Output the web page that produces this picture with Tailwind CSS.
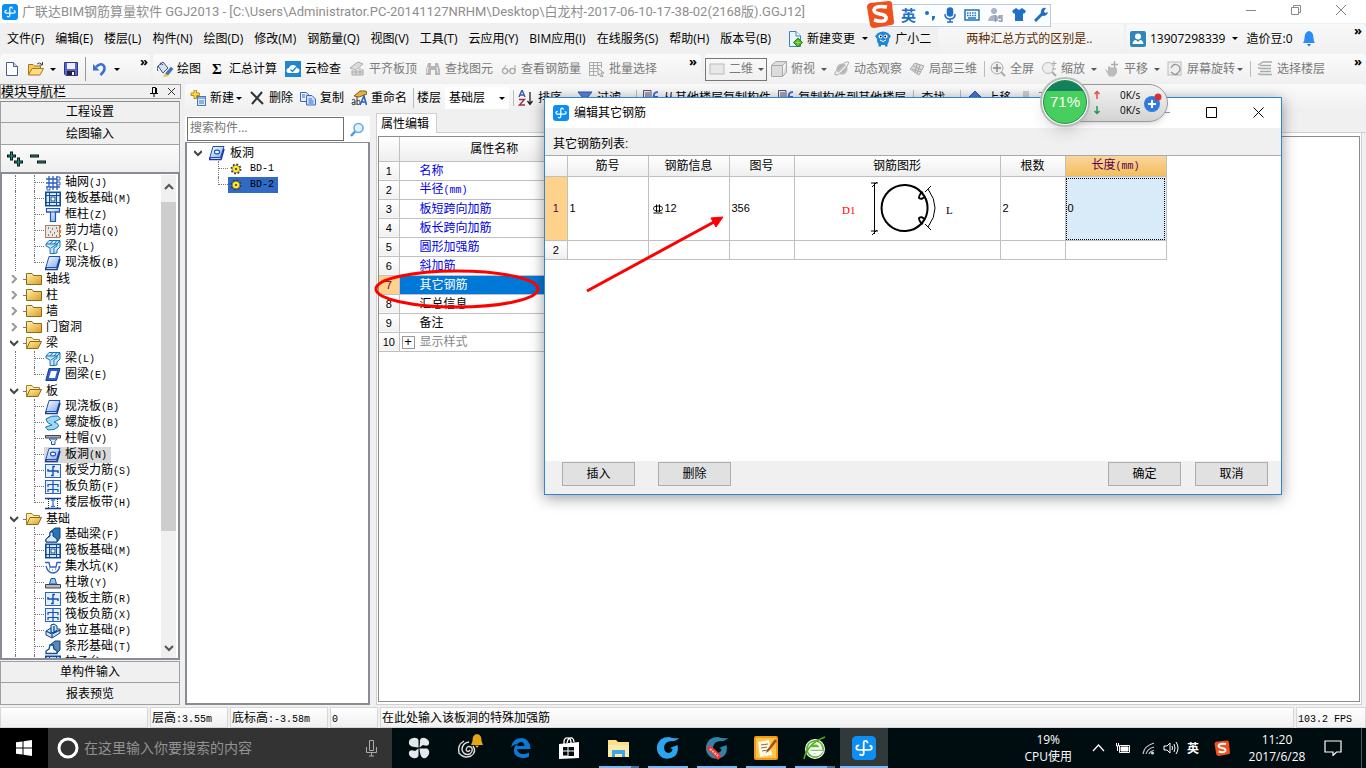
<!DOCTYPE html>
<html lang="zh-CN">
<head>
<meta charset="utf-8">
<meta name="viewport" content="width=device-width, initial-scale=1">
<title>广联达BIM钢筋算量软件 GGJ2013</title>
<script src="https://cdn.jsdelivr.net/npm/@tailwindcss/browser@4"></script>
</head>
<body class="relative flex h-screen flex-col overflow-hidden bg-[#f0f0f0] text-xs text-black font-['Open_Sans','Noto_Sans_CJK_SC',sans-serif]">

<svg class="absolute size-0">
  <linearGradient id="gBlue" x1="0" y1="0" x2="1" y2="1"><stop offset="0" stop-color="#ffffff"/><stop offset="1" stop-color="#7fa8ec"/></linearGradient>
  <linearGradient id="gGold" x1="0" y1="0" x2="1" y2="1"><stop offset="0" stop-color="#fff3b0"/><stop offset="1" stop-color="#dc9c1c"/></linearGradient>
  <symbol id="app" viewBox="0 0 16 16"><rect width="16" height="16" rx="3" fill="#0c8ff5"/><path d="M10.400 4.800Q10.300 3.200 9 3.200Q7.800 3.200 7.800 4.600V11.300Q7.800 12.800 6.500 12.800Q5.400 12.800 5.200 11.800M4.800 6.300Q2.900 6.300 2.900 7.800Q2.900 9.200 4.400 9.200H11.500Q13.200 9.200 13.200 7.800Q13.200 6.500 11.700 6.500" fill="none" stroke="#fff" stroke-width="1.200"/></symbol>
  <symbol id="doc" viewBox="0 0 16 16"><path d="M2.500 1.500H9.500L13.500 5.500V14.500H2.500Z" fill="#fff" stroke="#44618e"/><path d="M9.500 1.500V5.500H13.500" fill="#c8d8f0" stroke="#44618e"/></symbol>
  <symbol id="open" viewBox="0 0 16 16"><path d="M.5 14V3.500H5L6.500 5H12.500V7.500" fill="#f5c95c" stroke="#a8781c"/><path d="M.5 14L4 7.500H15.500L12 14Z" fill="#ffdd80" stroke="#a8781c"/><path d="M9 3Q12 .5 14 3.500M14.500 1V4H11.500" fill="none" stroke="#445"/></symbol>
  <symbol id="save" viewBox="0 0 16 16"><path d="M1.500 1.500H14.500V14.500H3L1.500 13Z" fill="#5a68cc" stroke="#2b3590"/><path d="M4 2H12V8H4Z" fill="#eef"/><path d="M4 10H12V14H4Z" fill="#223"/><path d="M9 11H11V14H9Z" fill="#fff"/></symbol>
  <symbol id="undo" viewBox="0 0 16 16"><path d="M4 6Q9 1 12 5Q14 9 8.500 14" fill="none" stroke="#3b6fd0" stroke-width="2.600"/><path d="M1 3V9.500H7.500Z" fill="#3b6fd0"/></symbol>
  <symbol id="paint" viewBox="0 0 16 16"><path d="M1 5L6 1L11 7L6 12Z" fill="#d5e0f2" stroke="#3a5078"/><path d="M4 4Q2 0 6 4M1 5Q-.5 8 1 10" stroke="#3a5078" fill="none"/><path d="M8 13L14 6L16 8L11 14Z" fill="#3f76c0" stroke="#28508c" stroke-width=".5"/><path d="M8 12L12 15L6 16Z" fill="#f0c040"/></symbol>
  <symbol id="cloud" viewBox="0 0 16 16"><rect width="16" height="16" fill="#1f86d2"/><path d="M4 12Q1 12 1.500 9Q2 7 4 7Q5 3.500 8.500 4Q11 4 11.500 7Q15 7.500 14.500 10Q14 12 12 12Z" fill="#fff"/><path d="M5.500 8.500L7.500 10.500L11 6.500" stroke="#1f86d2" fill="none" stroke-width="1.200"/></symbol>
  <symbol id="flat" viewBox="0 0 16 16"><path d="M1 7L9 1L14 3L7 9Z" fill="#ddd" stroke="#aaa"/><path d="M3 9V14H14V8M3 11H14M7 9V14M11 7V14" stroke="#aaa" fill="#ddd"/></symbol>
  <symbol id="bino" viewBox="0 0 16 16"><path d="M3 2H6V5H10V2H13L15 9V14H10V9H6V14H1V9Z" fill="#b5b5b5"/><path d="M3 6L2 12M12 6L13 12" stroke="#eee"/></symbol>
  <symbol id="glass" viewBox="0 0 16 16"><circle cx="4" cy="10" r="2.600" fill="none" stroke="#aaa" stroke-width="1.300"/><circle cx="11.500" cy="10" r="2.600" fill="none" stroke="#aaa" stroke-width="1.300"/><path d="M1.500 9L5 4M14 10V4M7 10H9" stroke="#aaa" fill="none"/></symbol>
  <symbol id="batch" viewBox="0 0 16 16"><path d="M.5 1.500H12.500V7M.5 1.500V14.500H8M.5 4.500H12.500M.5 7.500H9M.5 10.500H8M4.500 1.500V14.500M8.500 1.500V8" stroke="#aaa" fill="none"/><path d="M9 7L15 12H12L14 16L12 16L10.500 13L9 14Z" fill="#eee" stroke="#999"/></symbol>
  <symbol id="flat2d" viewBox="0 0 16 16"><rect x="1" y="3" width="14" height="10" fill="#e8e8e8" stroke="#bbb"/></symbol>
  <symbol id="cube" viewBox="0 0 16 16"><path d="M.5 4.500H11.500V15.500H.5ZM.5 4.500L4.500 .5H15.500L11.500 4.500M15.500 .5V11.500L11.500 15.500" fill="#dcdcdc" stroke="#aaa"/></symbol>
  <symbol id="orbit" viewBox="0 0 16 16"><circle cx="8" cy="8" r="5.500" fill="#bbb"/><path d="M1 14Q4 15 9 10Q15 4 14.500 1Q11 0 6 6Q0 11 1 14" fill="none" stroke="#a8a8a8"/><path d="M4 13L12 5" stroke="#eee" stroke-width="1.500"/></symbol>
  <symbol id="local3" viewBox="0 0 16 16"><path d="M1 8L6 2L15 5L10 14Z" fill="#ddd" stroke="#aaa"/><path d="M4 5L13 9M3 8L12 11M8 3L6 12M11 4L8 13" stroke="#aaa"/></symbol>
  <symbol id="full" viewBox="0 0 16 16"><circle cx="7" cy="7" r="6" fill="#eee" stroke="#aaa"/><path d="M7 3V11M3 7H11" stroke="#888" stroke-width="1.500"/><path d="M11 11L15 15" stroke="#aaa" stroke-width="2"/></symbol>
  <symbol id="zoomi" viewBox="0 0 16 16"><circle cx="7" cy="7" r="5.500" fill="#eee" stroke="#bbb"/><path d="M11 11L15 15" stroke="#aaa" stroke-width="2"/><path d="M13 0V5M10.500 2.500H15.500M11 8H15" stroke="#aaa"/></symbol>
  <symbol id="hand" viewBox="0 0 16 16"><path d="M1 8L4 10L4 6L6 5L7 7L8 6L10 7L12 6L13 8V12L10 15.500H5Z" fill="#bbb"/><path d="M10.500 0V7M7 3.500H14" stroke="#aaa" stroke-width="1.300"/></symbol>
  <symbol id="rot" viewBox="0 0 16 16"><rect x="1" y="1" width="13" height="13" fill="#eee" stroke="#bbb"/><path d="M4 7Q7 1 12 5Q15 10 9 13M4 11Q8 15 11 13" fill="none" stroke="#999" stroke-width="1.300"/></symbol>
  <symbol id="floors" viewBox="0 0 16 16"><path d="M1 4L6 1H15M3 4.500H14M3 7.500H14M3 10.500H14M3 13.500H15M1 7H3M1 13H3" stroke="#aaa" fill="none" stroke-width="1.300"/></symbol>
  <symbol id="newc" viewBox="0 0 16 16"><path d="M4 0H6.500V3H9.500V5.500H6.500V8.500H4V5.500H1V3H4Z" fill="#ffd84c" stroke="#b98c12"/><rect x="7.500" y="6.500" width="8" height="9" fill="#d7e8ff" stroke="#4a77b8"/><path d="M8 8H15M9 11H14M9 13H14" stroke="#4a77b8"/></symbol>
  <symbol id="delx" viewBox="0 0 16 16"><path d="M2 2L14 14M13 2L3 14" stroke="#333" stroke-width="2"/></symbol>
  <symbol id="copy" viewBox="0 0 16 16"><path d="M.5 2.500H6L9 5V11.500H.5Z" fill="#e5eeff" stroke="#3e68b8"/><path d="M6.500 5.500H12L15.500 9V15H6.500Z" fill="#cfe0ff" stroke="#3e68b8"/><path d="M2 5H5M2 7H5M8.500 9H12M8.500 11H13.500M8.500 13H13.500" stroke="#3e68b8"/></symbol>
  <symbol id="ren" viewBox="0 0 16 16"><path d="M3 6L9 1L15 1L16 4L8 7Z" fill="#e8b038" stroke="#806020"/><path d="M1 10Q4 8 4 11V15M4 12Q0 12 1 14Q2 15.500 4 14M6 7V15M6 11Q9 9 9 12.500Q9 15.500 6 14" fill="none" stroke="#333"/><path d="M9 15L13 6L15.500 15M10.500 12H15" fill="none" stroke="#2b5fc0" stroke-width="1.600"/></symbol>
  <symbol id="sort" viewBox="0 0 16 16"><path d="M1 7L4 0L7 7M2 5H6" fill="none" stroke="#3058b0" stroke-width="1.400"/><path d="M1 9.500H6.500L1.500 15H7" fill="none" stroke="#a03048" stroke-width="1.400"/><path d="M12 2V14M9.500 11L12 14.500L14.500 11" fill="none" stroke="#222" stroke-width="1.300"/></symbol>
  <symbol id="filt" viewBox="0 0 16 16"><path d="M1 2H15L10 8V14L6 12V8Z" fill="#5b83d6" stroke="#3555a0"/></symbol>
  <symbol id="cpf" viewBox="0 0 16 16"><path d="M.5 .5H8V12H.5Z" fill="#eef" stroke="#556"/><path d="M2 3H7M2 5H7M2 7H7" stroke="#556"/><path d="M15 2Q10 2 11 7H15M9 7L12 12" stroke="#3b6fd0" stroke-width="2" fill="none"/></symbol>
  <symbol id="up" viewBox="0 0 16 16"><path d="M8 1L15 8H11V14H5V8H1Z" fill="#4a74d0" stroke="#2d4f9c"/></symbol>
  <symbol id="down" viewBox="0 0 16 16"><path d="M8 15L15 8H11V1H5V8H1Z" fill="#ccc"/></symbol>
  <symbol id="chg" viewBox="0 0 16 16"><path d="M2.500 .5H9L13.500 5V15.500H2.500Z" fill="#eaf5ff" stroke="#3a86b8"/><path d="M9 .5V5H13.500" fill="#fff" stroke="#3a86b8"/><path d="M11 7L15.500 11.500L11 16L6.500 11.500Z" fill="#48b424" stroke="#2c8010"/><path d="M11 9V14M8.500 11.500H13.500" stroke="#8fe060"/></symbol>
  <symbol id="robot" viewBox="0 0 16 16"><path d="M3 2Q8-1 13 2L16 5L14 8Q14 12 12.500 13V15.500H10V14H6V15.500H3.500V13Q2 12 2 8L0 5Z" fill="#1d86d8"/><circle cx="5.500" cy="5.500" r="2" fill="#fff"/><circle cx="10.500" cy="5.500" r="2" fill="#fff"/><circle cx="5.800" cy="5.500" r=".9"/><circle cx="10.200" cy="5.500" r=".9"/><path d="M5 9Q8 12 11 9" stroke="#fff" fill="none"/></symbol>
  <symbol id="user" viewBox="0 0 16 16"><rect width="16" height="16" rx="2" fill="#2f86bd"/><circle cx="8" cy="5.500" r="3" fill="#fff"/><path d="M2.500 13Q3 9 6 9L8 11L10 9Q13 9 13.500 13Z" fill="#fff"/></symbol>
  <symbol id="bell" viewBox="0 0 16 16"><path d="M8 0Q12.500 1 12.500 7Q12.500 10 14 12H2Q3.500 10 3.500 7Q3.500 1 8 0Z" fill="#2b8cf5"/><path d="M6 13H10L8 15.500Z" fill="#2b6cc5"/></symbol>
  <symbol id="mag" viewBox="0 0 16 16"><circle cx="9.500" cy="6" r="4.500" fill="#dff1ff" stroke="#64aee0" stroke-width="1.600"/><path d="M6 9.500L2 14" stroke="#4a98d4" stroke-width="2.400"/></symbol>

  <symbol id="fold" viewBox="0 0 16 16"><path d="M.5 2.500H6L7.500 4.500H15.500V13.500H.5Z" fill="url(#gGold)" stroke="#8a6a1c"/></symbol>
  <symbol id="foldo" viewBox="0 0 16 16"><path d="M.5 13.500V2.500H6L7.500 4.500H13.500V7" fill="#ffe9a0" stroke="#a9832c"/><path d="M.5 13.500L4 6.500H15.500L12 13.500Z" fill="url(#gGold)" stroke="#8a6a1c"/></symbol>
  <symbol id="grid" viewBox="0 0 16 16"><path d="M4 1V15M8 1V15M12 1V15M1 4H15M1 8H15M1 12H15" stroke="#2a5bc0" stroke-width="1.300"/><path d="M12 2H15V5H12ZM12 7H15V10H12ZM2 12H5V15H2Z" fill="#fff" stroke="#2a5bc0"/></symbol>
  <symbol id="raft" viewBox="0 0 16 16"><rect x=".8" y="1.300" width="14.400" height="13.400" fill="#e0edff" stroke="#104a98" stroke-width="1.600"/><path d="M4.500 2V14M11.500 2V14M1 4.500H15M1 11.500H15" stroke="#104a98"/><rect x="6" y="6" width="4" height="4" fill="#fff" stroke="#104a98"/></symbol>
  <symbol id="col" viewBox="0 0 16 16"><path d="M1.500 1.500H14.500V5H10.500V14.500H5.500V5H1.500Z" fill="url(#gBlue)" stroke="#1f56b0" stroke-width="1.200"/><path d="M1 5H15" stroke="#1f56b0"/></symbol>
  <symbol id="shear" viewBox="0 0 16 16"><rect x=".5" y="2.500" width="14" height="12" fill="#e9e6e4" stroke="#b7795c"/><path d="M3 5H4M7 6H8M11 5H12M5 9H6M9 10H10M12 8H13M3 12H4M7 12H8M11 13H12" stroke="#222"/><path d="M15 2V5M15 7V10M15 12V14" stroke="#e07030" stroke-width="2"/></symbol>
  <symbol id="beam" viewBox="0 0 16 16"><path d="M1 5L4 1.500H15L12 5ZM1 5V7L5 9V14.500H9V9L12 7V5M12 5L15 2V8L12 11V14L9 14.500" fill="#c7e4fb" stroke="#1874b8"/><path d="M5 5L8 1.500M9 5L12 1.500M6 9L12 5" stroke="#1874b8"/></symbol>
  <symbol id="slab" viewBox="0 0 16 16"><path d="M4 1.500H15L11.500 12.500H.8Z" fill="url(#gBlue)" stroke="#1f4fb0"/><path d="M.8 12.500V14.500H12L15 4" fill="none" stroke="#14389c" stroke-width="1.600"/></symbol>
  <symbol id="ring" viewBox="0 0 16 16"><path d="M4 1.500H15L11.500 13.500H.8Z" fill="#2f5fc8" stroke="#123c94"/><path d="M6 4H12L10 11H4Z" fill="#fff"/></symbol>
  <symbol id="spiral" viewBox="0 0 16 16"><path d="M1 4Q6 0 13 1L15.500 4L9 7Q15 9 13 12Q10 15.500 3 15L.5 12L7 10Q1 8 1 4Z" fill="#9fd7f5" stroke="#1874b8"/></symbol>
  <symbol id="cap" viewBox="0 0 16 16"><path d="M.5 4.500H15.500V7H.5Z" fill="#aaa" stroke="#444"/><path d="M4 8H12L10 10.500V13.500H6.500V10.500Z" fill="#dceaff" stroke="#1f56b0"/></symbol>
  <symbol id="hole" viewBox="0 0 16 16"><path d="M4 1.500H15L11.500 12.500H.8Z" fill="url(#gBlue)" stroke="#1f4fb0"/><ellipse cx="8" cy="7" rx="2.600" ry="1.900" fill="#fff" stroke="#1f4fb0" stroke-width="1.100"/><path d="M.8 12.500V14.500H12L15 4" fill="none" stroke="#14389c" stroke-width="1.600"/></symbol>
  <symbol id="reb" viewBox="0 0 16 16"><rect x=".5" y="1.500" width="15" height="13" fill="#e4efff" stroke="#2e62c0"/><path d="M10 3.500H8V12.500H6M3 6V8H13V10" stroke="#1450b0" stroke-width="1.400" fill="none"/></symbol>
  <symbol id="neg" viewBox="0 0 16 16"><rect x=".5" y="1.500" width="15" height="13" fill="#e4efff" stroke="#2e62c0"/><path d="M8 2V14M3 8V5.500H13V8M3 13V10.500H13V13" stroke="#1450b0" stroke-width="1.200" fill="none"/></symbol>
  <symbol id="band" viewBox="0 0 16 16"><path d="M0 3.500H16M0 13.500H16" stroke="#14389c" stroke-width="1.500"/><path d="M3.500 4V13M12.500 4V13" stroke="#333" stroke-dasharray="1 1"/><path d="M8 5V12M6 5H10M6 11.500H10" stroke="#3b78d8" stroke-width="1.300"/></symbol>
  <symbol id="fbeam" viewBox="0 0 16 16"><path d="M1 12L5 8V5L10 1H15V11L12 15H1Z" fill="#2874b8" stroke="#0e3e78"/><path d="M1 15V12L5 9V5H8V9L12 12V15Z" fill="#d5ebfb" stroke="#0e3e78"/></symbol>
  <symbol id="pit" viewBox="0 0 16 16"><path d="M0 3.500H4L5 8H11L12 3.500H16M1 7Q3 14 8 14Q13 14 15 7" fill="none" stroke="#2e62c0" stroke-width="1.300"/><path d="M4 10H5M7 11H8M10 10H11M13 8H14" stroke="#2e62c0"/></symbol>
  <symbol id="pier" viewBox="0 0 16 16"><path d="M6 3.500H10L11.500 9H4.500Z" fill="#9cc3f2" stroke="#1f56b0"/><path d="M.5 9.500H15.500V13H.5Z" fill="#bbb" stroke="#345"/></symbol>
  <symbol id="iso" viewBox="0 0 16 16"><path d="M1 8L6 5V2L9 1L12 3V6L15 6V10L7 15L1 12Z" fill="#cfe6fa" stroke="#0e3e78"/><path d="M6 5V9L9 10L12 7M1 8L7 11L15 7M7 11V15M9 3V10" stroke="#0e4e98" stroke-width="1.300" fill="none"/></symbol>
  <symbol id="strip" viewBox="0 0 16 16"><path d="M5 6L10 2H15V11L12 14Z" fill="#5b87b8" stroke="#0e3e78"/><path d="M1 14.500V12L4 10L5 6H8L9 10L12 12V14.500Z" fill="#fff" stroke="#0e4e98" stroke-width="1.300"/></symbol>
  <symbol id="gear" viewBox="0 0 16 16"><circle cx="8" cy="8" r="4.500" fill="none" stroke="#333" stroke-width="1.800" stroke-dasharray="1.800 1.700"/><circle cx="8" cy="8" r="3.800" fill="#ffe820" stroke="#555" stroke-width=".6"/><circle cx="8" cy="8" r="1.100" fill="#333"/></symbol>
  <symbol id="sogou" viewBox="0 0 28 28"><path d="M4 3L23 1Q26 1 26 4L28 22Q28 25 25 25L8 28Q5 28 4 25L1 7Q1 4 4 3Z" fill="#f0501e"/><path d="M21 7Q9 5 8 10Q8 13 14 14Q21 15 20 19Q18 23 8 20" fill="none" stroke="#fff" stroke-width="3.600"/></symbol>
  <symbol id="swirl" viewBox="0 0 24 24"><path d="M23.500 2Q19 6 16 5Q9 5 8 11Q8 16 12 17Q16 17 16.500 13L14 12L21.500 9Q23 16 19 20Q14 24 7 22Q0 18 1 10Q3 1 13 1Q18 3 23.500 2Z"/></symbol>
</svg>

<!-- title bar -->
<header class="flex h-[23px] shrink-0 items-center bg-white pl-[2px] text-[#8e8e8e]">
  <svg class="mr-1 size-4"><use href="#app"/></svg>
  <h1 class="whitespace-nowrap font-['Roboto','Noto_Sans_CJK_SC',sans-serif] text-[13px]">广联达BIM钢筋算量软件 GGJ2013 - [C:\Users\Administrator.PC-20141127NRHM\Desktop\白龙村-2017-06-10-17-38-02(2168版).GGJ12]</h1>
  <div class="ml-auto flex items-center gap-[35px] pb-1 pr-5">
    <button aria-label="最小化" class="block"><svg class="size-[10px]" fill="none" stroke="#888"><path d="M0 5.500H10"/></svg></button>
    <button aria-label="还原" class="block"><svg class="size-[10px]" fill="none" stroke="#888"><path d="M.5 2.500H7.500V9.500H.5ZM2.500 2V.5H9.500V7.500H8"/></svg></button>
    <button aria-label="关闭" class="block"><svg class="size-[10px]" fill="none" stroke="#888"><path d="M0 0L10 10M10 0L0 10"/></svg></button>
  </div>
</header>

<!-- menu bar -->
<nav class="flex h-[31px] shrink-0 items-center whitespace-nowrap">
  <div id="menus" class="flex gap-[11px] pl-[7px]"></div>
  <button class="ml-4 flex items-center gap-1"><svg class="size-4"><use href="#chg"/></svg>新建变更<span class="ml-[3px] border-x-[3px] border-t-[3px] border-x-transparent border-t-black"></span></button>
  <button class="ml-[7px] flex items-center gap-1"><svg class="size-4"><use href="#robot"/></svg>广小二</button>
  <a href="#" class="ml-[7px] flex h-[30px] flex-1 items-center rounded bg-gradient-to-b from-[#f8f8f8] to-[#f1f1f1] pl-7 text-[#5c2c00]">两种汇总方式的区别是..</a>
  <div class="ml-[2px] flex h-[30px] w-[240px] items-center rounded bg-gradient-to-b from-[#f8f8f8] to-[#f1f1f1] pl-1">
    <svg class="mr-1 size-4"><use href="#user"/></svg><button class="flex items-center gap-[7px]">13907298339<span class="border-x-[3px] border-t-[3px] border-x-transparent border-t-black"></span></button>
    <span class="ml-2">造价豆:0</span><svg class="ml-2 size-4"><use href="#bell"/></svg>
    <span class="mb-4 ml-auto mr-1 text-[13px] font-bold leading-none">»</span>
  </div>
</nav>

<!-- main toolbar -->
<div class="flex h-[30px] shrink-0 gap-[3px] whitespace-nowrap text-[#7a7a7a]">
  <div class="flex w-[150px] items-center rounded bg-gradient-to-b from-[#fbfbfb] to-[#efefef] pl-1">
    <button aria-label="新建" class="block"><svg class="size-4"><use href="#doc"/></svg></button>
    <button aria-label="打开" class="ml-2 flex items-center gap-1.5"><svg class="size-4"><use href="#open"/></svg><span class="border-x-[3px] border-t-[3px] border-x-transparent border-t-black"></span></button>
    <button aria-label="保存" class="ml-[7px] block"><svg class="size-4"><use href="#save"/></svg></button>
    <span class="mx-[6px] h-6 w-px bg-[#999]"></span>
    <button aria-label="撤销" class="flex items-center gap-1.5"><svg class="size-4"><use href="#undo"/></svg><span class="border-x-[3px] border-t-[3px] border-x-transparent border-t-black"></span></button>
    <span class="mb-4 ml-auto mr-[2px] text-[13px] font-bold leading-none text-black">»</span>
  </div>
  <div class="flex w-[548px] items-center gap-2 rounded bg-gradient-to-b from-[#fbfbfb] to-[#efefef] pl-1">
    <button class="flex items-center gap-1 text-black"><svg class="size-4"><use href="#paint"/></svg>绘图</button>
    <button class="flex items-center gap-1 text-black"><span class="w-4 text-center font-['Liberation_Serif',serif] text-[15px] font-bold leading-4">Σ</span>汇总计算</button>
    <button class="flex items-center gap-1 text-black"><svg class="size-4"><use href="#cloud"/></svg>云检查</button>
    <button class="flex items-center gap-1"><svg class="size-4"><use href="#flat"/></svg>平齐板顶</button>
    <button class="flex items-center gap-1"><svg class="size-4"><use href="#bino"/></svg>查找图元</button>
    <button class="flex items-center gap-1"><svg class="size-4"><use href="#glass"/></svg>查看钢筋量</button>
    <button class="flex items-center gap-1"><svg class="size-4"><use href="#batch"/></svg>批量选择</button>
    <span class="mb-4 ml-auto mr-1 text-[13px] font-bold leading-none text-black">»</span>
  </div>
  <div class="flex flex-1 items-center rounded bg-gradient-to-b from-[#fbfbfb] to-[#efefef] pl-px">
    <button class="flex h-[23px] w-[62px] items-center gap-1 border border-[#777] pl-[3px]"><svg class="size-4"><use href="#flat2d"/></svg>二维<span class="ml-px border-x-[3px] border-t-[3px] border-x-transparent border-t-[#555]"></span></button>
    <button class="ml-1 flex items-center gap-1"><svg class="size-4"><use href="#cube"/></svg>俯视<span class="ml-[2px] border-x-[3px] border-t-[3px] border-x-transparent border-t-[#555]"></span></button>
    <button class="ml-[7px] flex items-center gap-1"><svg class="size-4"><use href="#orbit"/></svg>动态观察</button>
    <button class="ml-[7px] flex items-center gap-1"><svg class="size-4"><use href="#local3"/></svg>局部三维</button>
    <span class="ml-[7px] mr-[5px] h-4 w-px bg-[#bbb]"></span>
    <button class="flex items-center gap-1"><svg class="size-4"><use href="#full"/></svg>全屏</button>
    <button class="ml-[7px] flex items-center gap-1"><svg class="size-4"><use href="#zoomi"/></svg>缩放<span class="ml-[2px] border-x-[3px] border-t-[3px] border-x-transparent border-t-[#555]"></span></button>
    <button class="ml-[7px] flex items-center gap-1"><svg class="size-4"><use href="#hand"/></svg>平移<span class="ml-[2px] border-x-[3px] border-t-[3px] border-x-transparent border-t-[#555]"></span></button>
    <button class="ml-[7px] flex items-center gap-1"><svg class="size-4"><use href="#rot"/></svg>屏幕旋转<span class="-ml-[2px] border-x-[3px] border-t-[3px] border-x-transparent border-t-[#555]"></span></button>
    <span class="ml-[7px] mr-[6px] h-4 w-px bg-[#bbb]"></span>
    <button class="flex items-center gap-1"><svg class="size-4"><use href="#floors"/></svg>选择楼层</button>
    <span class="mb-4 ml-auto mr-1 text-[13px] font-bold leading-none text-black">»</span>
  </div>
</div>

<!-- work area -->
<div class="flex min-h-0 flex-1">
  <!-- module navigator -->
  <aside class="flex w-[181px] shrink-0 flex-col pb-[2px] font-['Liberation_Sans','Noto_Sans_CJK_SC',sans-serif]">
    <div class="flex h-[15px] items-center border border-[#a0a0a0] pr-[4px] text-[13px] leading-[13px]">模块导航栏
      <button aria-label="固定" class="ml-auto mr-2 block"><svg class="size-[10px]" fill="none" stroke="#000"><path d="M3.500 6V.5H6.500V6M7.500 1V6M1 6.500H9M5 7V10"/></svg></button>
      <button aria-label="关闭面板" class="block"><svg class="size-[9px]" fill="none" stroke="#333"><path d="M1 1L8 8M8 1L1 8"/></svg></button>
    </div>
    <button class="mr-px mt-[2px] h-[22px] border border-[#a0a0a0] border-t-[#888] leading-5">工程设置</button>
    <button class="mr-px h-[22px] border-x border-b border-[#a0a0a0] leading-5">绘图输入</button>
    <div class="mr-px flex h-[27px] items-center gap-[6px] border-x border-[#a0a0a0] bg-gradient-to-b from-[#fbfbfb] to-[#efefef] pl-[6px]">
      <button aria-label="全部展开" class="block"><svg class="h-4 w-[17px]" fill="none"><path d="M0 5H9M4.500 .5V9.500M7 11H16M11.500 6.500V15.500" stroke="#111" stroke-width="3"/><path d="M1 5H8M4.500 1.500V8.500M8 11H15M11.500 7.500V14.500" stroke="#0a9c90" stroke-width="1.200"/></svg></button>
      <button aria-label="全部折叠" class="block"><svg class="h-4 w-[17px]" fill="none"><path d="M0 5H9M7 11H16" stroke="#111" stroke-width="3"/><path d="M1 5H8M8 11H15" stroke="#0a9c90" stroke-width="1.200"/></svg></button>
    </div>
    <div class="mr-px flex min-h-0 flex-1 border-2 border-[#888c94] bg-white pr-[2px] pt-px">
      <ul id="tree" class="h-full min-w-0 flex-1 overflow-hidden whitespace-nowrap leading-4"></ul>
      <div class="flex w-[15px] flex-col items-center bg-[#f0f0f0]">
        <svg class="mb-[7px] mt-[4px] h-4 w-4" fill="none" stroke="#555" stroke-width="2"><path d="M4 10L8 6L12 10"/></svg>
        <div class="h-[329px] w-full bg-[#cdcdcd]"></div>
        <svg class="mb-[2px] mt-auto h-4 w-4" fill="none" stroke="#555" stroke-width="2"><path d="M4 6L8 10L12 6"/></svg>
      </div>
    </div>
    <button class="mr-px mt-px h-[22px] border border-[#a0a0a0] leading-5">单构件输入</button>
    <button class="mr-px h-[22px] border-x border-b border-[#a0a0a0] leading-5">报表预览</button>
  </aside>

  <div class="ml-[4px] flex min-w-0 flex-1 flex-col">
    <!-- component toolbar -->
    <div class="flex h-7 shrink-0 items-center whitespace-nowrap rounded bg-gradient-to-b from-[#fbfbfb] to-[#efefef] pl-[5px]">
      <button class="flex items-center gap-1"><svg class="size-4"><use href="#newc"/></svg>新建<span class="-ml-[2px] border-x-[3px] border-t-[3px] border-x-transparent border-t-black"></span></button>
      <button class="ml-[7px] flex items-center gap-1"><svg class="size-4"><use href="#delx"/></svg>删除</button>
      <button class="ml-[7px] flex items-center gap-1"><svg class="size-4"><use href="#copy"/></svg>复制</button>
      <button class="ml-[7px] flex items-center gap-1"><svg class="size-4"><use href="#ren"/></svg>重命名</button>
      <span class="ml-[6px] mr-[3px] h-5 w-px bg-[#bbb]"></span>
      <label for="floor">楼层</label>
      <span class="relative ml-1 flex">
        <select id="floor" class="h-[22px] w-[64px] appearance-none bg-white pl-1"><option>基础层</option></select>
        <span class="pointer-events-none absolute right-[4px] top-[10px] border-x-[3px] border-t-[3px] border-x-transparent border-t-black"></span>
      </span>
      <span class="mx-[4px] h-4 w-px bg-[#bbb]"></span>
      <button class="flex items-center gap-1"><svg class="size-4"><use href="#sort"/></svg>排序<span class="-ml-[2px] border-x-[3px] border-t-[3px] border-x-transparent border-t-black"></span></button>
      <button class="ml-[7px] flex items-center gap-1"><svg class="size-4"><use href="#filt"/></svg>过滤<span class="-ml-[2px] border-x-[3px] border-t-[3px] border-x-transparent border-t-black"></span></button>
      <span class="ml-[7px] mr-[6px] h-4 w-px bg-[#bbb]"></span>
      <button class="flex items-center gap-1"><svg class="size-4"><use href="#cpf"/></svg>从其他楼层复制构件</button>
      <button class="ml-[7px] flex items-center gap-1"><svg class="size-4"><use href="#cpf"/></svg>复制构件到其他楼层</button>
      <span class="mx-[7px] h-4 w-px bg-[#bbb]"></span>
      <button class="flex items-center gap-1">查找<span class="-ml-[1px] border-x-[3px] border-t-[3px] border-x-transparent border-t-black"></span></button>
      <span class="mx-[6px] h-4 w-px bg-[#bbb]"></span>
      <button class="flex items-center gap-1"><svg class="size-4"><use href="#up"/></svg>上移</button>
      <button class="ml-[7px] flex items-center gap-1 text-[#888]"><svg class="size-4"><use href="#down"/></svg>下移</button>
    </div>

    <div class="flex min-h-0 flex-1 gap-[6px]">
      <!-- component list -->
      <section class="flex w-[185px] shrink-0 flex-col pb-[2px]">
        <div class="mt-[4px] flex h-[26px] bg-white pl-[2px] pt-px">
          <input aria-label="搜索构件" placeholder="搜索构件..." class="h-6 w-[157px] border border-[#6f6f6f] bg-white px-[2px] pb-1 placeholder:text-[#777]">
          <button aria-label="搜索" class="ml-[5px] block"><svg class="size-4"><use href="#mag"/></svg></button>
        </div>
        <ul class="min-h-0 flex-1 border-2 border-t border-[#888c94] bg-white pl-[7px] pt-[2px] font-['Liberation_Sans','Noto_Sans_CJK_SC',sans-serif] leading-4">
          <li class="flex h-4 items-center"><svg class="mr-[7px] size-2" fill="none" stroke="#444" stroke-width="2"><path d="M0 2L4 6L8 2"/></svg><svg class="mr-[5px] size-4"><use href="#hole"/></svg>板洞</li>
          <li class="flex h-4 items-center pl-6"><span class="h-4 w-[10px] border-l border-dotted border-[#777]"><span class="block h-2 border-b border-dotted border-[#777]"></span></span><svg class="mr-[6px] size-4"><use href="#gear"/></svg><span class="font-['Liberation_Mono',monospace] text-[10px]">BD-1</span></li>
          <li class="flex h-4 items-center pl-6"><span class="h-4 w-[10px]"><span class="block h-2 border-b border-l border-dotted border-[#777]"></span></span><span class="flex h-4 items-center bg-[#316ac5] pr-1"><svg class="mr-[6px] size-4"><use href="#gear"/></svg><span class="font-['Liberation_Mono',monospace] text-[10px]">BD-2</span></span></li>
        </ul>
      </section>

      <!-- property editor -->
      <section class="flex min-w-0 flex-1 flex-col pb-[2px] font-['Liberation_Sans','Noto_Sans_CJK_SC',sans-serif]">
        <div class="flex h-[21px] items-end"><button class="mt-px h-5 w-[61px] border border-b-0 border-[#d0d0d0] bg-white pr-[3px]">属性编辑</button><span class="h-px flex-1 bg-[#d0d0d0]"></span></div>
        <div class="mr-1 flex min-h-0 flex-1 flex-col border-x border-b border-[#d0d0d0] bg-white px-px pb-[2px] pt-[3px]">
          <div class="min-h-0 flex-1 border border-[#8c8c8c] bg-white">
            <table class="w-[210px] table-fixed border-collapse">
              <colgroup><col class="w-[20px]"><col></colgroup>
              <thead><tr class="h-[24px] bg-gradient-to-b from-white to-[#eee]"><th class="border-b border-r border-[#c0c0c0]"></th><th class="border-b border-r border-[#c0c0c0] pl-[1px] font-normal">属性名称</th></tr></thead>
              <tbody id="props"></tbody>
            </table>
          </div>
        </div>
      </section>
    </div>
  </div>
</div>

<!-- status bar -->
<footer class="flex h-[21px] shrink-0 gap-[2px] whitespace-nowrap font-['Liberation_Sans','Noto_Sans_CJK_SC',sans-serif] leading-5">
  <div class="w-[148px] border border-[#d6d6d6] bg-gradient-to-b from-white to-[#f0f0f0]"></div>
  <div data-mono class="w-[78px] border border-[#d6d6d6] bg-gradient-to-b from-white to-[#f0f0f0] pl-px">层高:3.55m</div>
  <div data-mono class="w-[98px] border border-[#d6d6d6] bg-gradient-to-b from-white to-[#f0f0f0] pl-px">底标高:-3.58m</div>
  <div data-mono class="w-[48px] border border-[#d6d6d6] bg-gradient-to-b from-white to-[#f0f0f0] pl-px">0</div>
  <div class="flex-1 border border-[#d6d6d6] bg-gradient-to-b from-white to-[#f0f0f0] pl-px">在此处输入该板洞的特殊加强筋</div>
  <div data-mono class="w-[70px] border border-[#d6d6d6] bg-gradient-to-b from-white to-[#f0f0f0] pl-px">103.2 FPS</div>
</footer>

<!-- taskbar -->
<div class="flex h-10 shrink-0 bg-[#000d10] text-white">
  <button aria-label="开始" class="flex w-12 items-center justify-center bg-black"><svg class="size-4" fill="#fff"><path d="M0 2.300L6.500 1.400V7.500H0ZM7.500 1.200L16 0V7.500H7.500ZM0 8.500H6.500V14.600L0 13.700ZM7.500 8.500H16V16L7.500 14.800Z"/></svg></button>
  <label class="flex w-[344px] items-center bg-[#333] pl-[9px] pr-[14px]">
    <svg class="mr-[5px] size-[22px]" fill="none" stroke="#fff" stroke-width="3"><circle cx="11" cy="11" r="9"/></svg>
    <input aria-label="搜索" placeholder="在这里输入你要搜索的内容" class="min-w-0 flex-1 bg-transparent text-sm placeholder:text-[#929292]">
    <svg class="h-[18px] w-[13px]" fill="none" stroke="#aaa"><path d="M4.500 1.500H8.500V11.500H4.500ZM1.500 8V13.500H11.500V8M6.500 14V17M4 17H9"/></svg>
  </label>
  <div class="ml-[2px] flex">
    <button aria-label="360" class="flex w-[49px] items-center justify-center"><svg class="size-[22px]" fill="#e4e8ea"><path d="M10.500 10.500V3Q9 0 5 1Q0 2 1 7Q2 10 10.500 10.500ZM11.500 10.500Q12 6 12 3Q13 0 17 1Q22 3 21 7Q20 10 15 8ZM11.500 11.500H19Q22 13 21 17Q19 22 15 21Q12 20 11.500 11.500ZM10.500 11.500V19Q9 22 5 21Q0 19 1 15Q2 12 7 14Z"/></svg></button>
    <button aria-label="通知中心" class="flex w-[49px] items-center justify-center pl-1"><svg class="h-[30px] w-7" fill="none"><path d="M10 17Q11 12 15 14Q18 17 14 21Q8 23 6 17Q6 10 13 9M14 17Q12 20 10 17M17 13Q21 19 15 23Q8 26 3 20Q1 12 8 8" stroke="#ddd" stroke-width="1.400"/><path d="M21 1Q26 2 25.500 8L27 12H15L16.500 8Q16 2 21 1ZM19 12.500H23L21 15Z" fill="#e5a812"/></svg></button>
    <button aria-label="Edge" class="flex w-[49px] items-center justify-center pl-2"><svg class="size-[22px]"><path d="M1 10Q3 1 12 1Q20 2 20.500 12H7Q8 17 13 17Q17 17 19 15.500V19.500Q16 21.500 12 21Q3 20 4 12Q5 8 8 6.500Q4 7 1 10ZM7 9H14.500Q14 5 11 5Q7.500 5.500 7 9Z" fill="#0b78d6"/></svg></button>
    <button aria-label="应用商店" class="flex w-[49px] items-center justify-center pl-[6px]"><svg class="size-[24px]"><path d="M2 8L22 6V22L2 23Z" fill="#fff"/><path d="M7 8V5Q8 1 11 2Q14 2 14 7M10 7Q11 1 15 2Q17 3 17 6" fill="none" stroke="#fff" stroke-width="1.300"/><path d="M6 11H10.500V14.500H6ZM11.500 11H17V14.500H11.500ZM6 15.500H10.500V19.500H6ZM11.500 15.500H17V20H11.500Z" fill="#000d10"/></svg></button>
    <button aria-label="文件资源管理器" class="flex w-[49px] flex-col items-center justify-end pl-2"><svg class="mb-[6px] size-[23px]"><path d="M1 3H9L11 5H22V20H1Z" fill="#fbdf8b"/><path d="M1 8H22V20H1Z" fill="#ffe9a6"/><path d="M5 20V13H18V20H15V17H8V20Z" fill="#3aa7e8"/></svg><span class="h-[2px] w-10 border-r-8 border-[#4a7296] bg-[#78b6f4]"></span></button>
    <button aria-label="广联达" class="flex w-[49px] flex-col items-center justify-end pl-2"><svg class="mb-[6px] size-6" fill="#2aa5ee"><use href="#swirl"/></svg><span class="h-[2px] w-10 bg-[#78b6f4]"></span></button>
    <button aria-label="广联达工具" class="flex w-[49px] flex-col items-center justify-end pl-2"><svg class="mb-[6px] size-6" fill="#2c86a8"><use href="#swirl"/><path d="M1 12L5 9L17 20L13 24Z" fill="#e83a3a"/><path d="M5 13L13 20" stroke="#fbb" stroke-width="2" stroke-dasharray="2 1"/></svg><span class="h-[2px] w-10 bg-[#78b6f4]"></span></button>
    <button aria-label="便笺" class="flex w-[49px] flex-col items-center justify-end pl-2"><svg class="mb-[6px] size-6"><rect width="24" height="24" rx="2" fill="#f29a18"/><path d="M2 2H22V22H2Z" fill="#ffc64a"/><path d="M4 6L15 4L18 19L6 21Z" fill="#fffbe8"/><path d="M7 9L14 8M7 12L13 11M8 15L15 14" stroke="#8a6a40"/><path d="M21 3L13 14L12 17L15 15L23 5Z" fill="#b04a18"/></svg><span class="h-[2px] w-10 bg-[#78b6f4]"></span></button>
    <button aria-label="浏览器" class="flex w-[49px] flex-col items-center justify-end pl-2"><svg class="mb-[6px] size-6"><circle cx="12" cy="13" r="10" fill="#fff"/><circle cx="12" cy="13" r="9" fill="#5cb82c"/><path d="M6 12.500H18Q17 7 12 7Q6.500 7.500 6 13Q6.500 19 12 19Q16 19 18 16H6" fill="none" stroke="#fff" stroke-width="2.400"/><path d="M1 23Q4 8 22 1" fill="none" stroke="#4cb020" stroke-width="1.500"/></svg><span class="h-[2px] w-10 border-r-8 border-[#4a7296] bg-[#78b6f4]"></span></button>
    <button aria-label="钢筋算量" class="ml-[5px] flex w-12 flex-col items-center justify-end bg-[#32393b]"><svg class="mb-[6px] size-6"><use href="#app"/></svg><span class="h-[2px] w-full bg-[#78b6f4]"></span></button>
  </div>
  <div class="ml-auto flex items-center text-center leading-[17px]">
    <div class="mr-5">19%<br>CPU使用</div>
    <svg class="mr-[10px] h-3 w-[13px]" fill="none" stroke="#fff" stroke-width="1.200"><path d="M1 9L6.500 3L12 9"/></svg>
    <svg class="mr-[10px] h-3 w-4" fill="none" stroke="#fff"><path d="M4.500 3.500H14.500V10.500H4.500ZM1.500 1V4H3.500V1M2.500 4V9"/><path d="M6 5H13V9H6Z" fill="#fff"/></svg>
    <svg class="mr-[8px] h-[14px] w-[14px]" fill="none" stroke="#ccc" stroke-width="1.200"><path d="M2 13Q3 5 13 2M5 13Q6 8 13 6M8 13Q9 10 13 9.500"/><circle cx="11.500" cy="12" r="1" fill="#fff"/></svg>
    <svg class="mr-[8px] h-4 w-4" fill="none" stroke="#fff"><path d="M1 6H4L7 3V13L4 10H1ZM9 6Q10 8 9 10M11 4Q13 8 11 12M13 2Q17 8 13 14"/></svg>
    <span class="mr-[15px] font-bold">英</span>
    <svg class="mr-[17px] size-4"><use href="#sogou"/></svg>
    <div class="w-[60px]">11:20<br>2017/6/28</div>
    <button aria-label="操作中心" class="ml-[5px] mr-[19px] block"><svg class="ml-3 h-4 w-[18px]" fill="none" stroke="#fff" stroke-width="1.200"><path d="M1 1H17V12H12.500L9 15.500V12H1Z"/></svg></button>
    <span class="mr-1 h-10 w-px bg-[#555]"></span>
  </div>
</div>

<!-- input method bar -->
<div class="absolute left-[866px] top-0 flex h-[27px] items-center">
  <svg class="z-10 size-7"><use href="#sogou"/></svg>
  <div class="-ml-[14px] mt-[3px] flex h-[23px] w-[171px] items-center gap-2 border border-[#b9c9e2] bg-[#fbfdff] pl-5 text-[15px] font-bold leading-5 text-[#1f6fc4]">
    <span>英</span>
    <svg class="h-4 w-3" fill="#1f6fc4"><circle cx="3" cy="6" r="2"/><path d="M8 9H11Q11 13 8 14Z"/></svg>
    <svg class="h-4 w-3" fill="none" stroke="#1f6fc4" stroke-width="1.500"><rect x="3.500" y="1" width="5" height="8" rx="2.500" fill="#1f6fc4"/><path d="M1 7Q1 12 6 12Q11 12 11 7M6 12V15M3 15H9"/></svg>
    <svg class="h-4 w-4" fill="none" stroke="#1f6fc4" stroke-width="1.500"><path d="M1 3H15V13H1Z"/><path d="M3 6H13M3 8.500H13" stroke-dasharray="1.500 1"/><path d="M4 11H12"/></svg>
    <svg class="h-4 w-4"><circle cx="6" cy="4" r="3" fill="#aab4c8"/><path d="M0 14Q1 8 6 8Q9 8 10 10V14Z" fill="#aab4c8"/><path d="M7.500 8V15M15 9H11V11H14V14H10.500" stroke="#8a94a8" fill="none" stroke-width="1.300"/></svg>
    <svg class="h-4 w-[14px]" fill="#1f6fc4"><path d="M4 1L7 3L10 1L14 4L12 7L11 6V14H3V6L2 7L0 4Z"/></svg>
    <svg class="h-4 w-[14px]"><path d="M1 14L8 7" stroke="#1f6fc4" stroke-width="3"/><path d="M7 4Q8 0 12 1L10 4L11 6L14 5Q13 9 9 9Q6 8 7 4Z" fill="#1f6fc4"/></svg>
  </div>
</div>

<!-- dialog -->
<div role="dialog" aria-labelledby="dlgTitle" class="absolute left-[544px] top-[97px] flex h-[398px] w-[738px] flex-col border border-[#2f86d8] bg-[#f0f0f0] shadow-[0_3px_14px_rgba(0,0,0,0.4)]">
  <div class="flex h-[30px] items-center bg-white pl-2">
    <svg class="mr-[5px] size-4"><use href="#app"/></svg><h2 id="dlgTitle">编辑其它钢筋</h2>
    <div class="ml-auto flex gap-[36px] pb-[2px] pr-[17px]">
      <button aria-label="最小化窗口" class="block"><svg class="size-[11px]" stroke="#999"><path d="M0 5.500H11"/></svg></button>
      <button aria-label="最大化窗口" class="block"><svg class="size-[11px]" fill="none" stroke="#000"><path d="M.5 .5H10.500V10.500H.5Z"/></svg></button>
      <button aria-label="关闭窗口" class="block"><svg class="size-[11px]" stroke="#000"><path d="M.5 .5L10.500 10.500M10.500 .5L.5 10.500"/></svg></button>
    </div>
  </div>
  <div class="flex flex-1 flex-col font-['Liberation_Sans','Noto_Sans_CJK_SC',sans-serif]">
    <div class="h-[27px] pl-2 pt-1 leading-6">其它钢筋列表:</div>
    <div class="h-[306px] border-t border-[#a8a8a8] bg-white">
      <table class="w-[621px] table-fixed border-collapse">
        <colgroup><col class="w-[22px]"><col class="w-[81px]"><col class="w-[81px]"><col class="w-[65px]"><col class="w-[206px]"><col class="w-[65px]"><col class="w-[101px]"></colgroup>
        <thead><tr class="h-[19px] bg-gradient-to-b from-white to-[#eee] leading-[19px] [&>th]:border-b [&>th]:border-r [&>th]:border-[#c0c0c0] [&>th]:p-0 [&>th]:font-normal">
          <th></th><th>筋号</th><th>钢筋信息</th><th>图号</th><th>钢筋图形</th><th>根数</th><th data-mono class="bg-gradient-to-b from-[#fad59a] to-[#f2bd5c] text-[#5a0050]">长度(mm)</th></tr></thead>
        <tbody class="[&_td]:border-b [&_td]:border-r [&_td]:border-[#c0c0c0] [&_td]:p-0 [&_td]:pl-[2px] [&_th]:border-b [&_th]:border-r [&_th]:border-[#c0c0c0] [&_th]:p-0 [&_th]:font-normal">
          <tr class="h-[64px] text-[11px]"><th class="bg-[#ffd28c] text-[#5a0050]">1</th><td>1</td>
            <td><span class="flex items-center pl-[2px]"><svg class="mr-[2px] size-[10px]" fill="none" stroke="#000"><path d="M3.500 .5V8M6.500 .5V8M.5 9H9.500"/><ellipse cx="5" cy="4.500" rx="4.500" ry="2.500"/></svg>12</span></td>
            <td>356</td>
            <td><svg class="ml-[40px] h-[60px] w-[130px]" fill="none" stroke="#000"><text x="5" y="35" fill="#f00" stroke="none" font-family="Liberation Serif" font-size="11">D1</text><path d="M37.500 4V55M34 4H41M34 52H41M35 8L40 3M35 56L40 51"/><path d="M85 14A23 23 0 1 0 85 44A23 23 0 0 0 85 14" stroke-width="2"/><path d="M86 13Q82 15 82 19Q85 21 87 18M86 45Q82 43 82 39Q85 37 87 40" stroke-width="1.800"/><path d="M91 10Q105 29 91 48M88 13L94 7M88 45L94 51"/><text x="109" y="35" fill="#000" stroke="none" font-family="Liberation Serif" font-size="11">L</text></svg></td>
            <td>2</td><td class="bg-[#d9eaf9] outline-1 -outline-offset-2 outline-dotted outline-black">0</td></tr>
          <tr class="h-[19px] text-[11px]"><th class="bg-gradient-to-b from-white to-[#eee]">2</th><td></td><td></td><td></td><td></td><td></td><td></td></tr>
        </tbody>
      </table>
    </div>
    <div class="flex gap-[23px] pl-[17px] pr-[13px] pt-px">
      <button class="h-6 w-[73px] border border-[#adadad] bg-[#e1e1e1]">插入</button>
      <button class="h-6 w-[73px] border border-[#adadad] bg-[#e1e1e1]">删除</button>
      <div class="ml-auto flex gap-[14px]">
        <button class="h-6 w-[73px] border border-[#adadad] bg-[#e1e1e1]">确定</button>
        <button class="h-6 w-[73px] border border-[#adadad] bg-[#e1e1e1]">取消</button>
      </div>
    </div>
  </div>
</div>

<!-- speed widget -->
<div class="absolute left-[1040px] top-[77px] flex h-[50px] items-center">
  <div class="absolute left-6 top-[7px] flex h-[38px] w-[104px] items-center rounded-r-full border border-[#999] bg-gradient-to-b from-[#f3f3f3] to-[#d4d4d4] pl-7 text-[10px] leading-[15px] shadow-md">
    <svg class="h-[26px] w-[8px]" fill="none" stroke-width="1.500"><path d="M4 9V2M1.500 4L4 1.500L6.500 4" stroke="#e85040"/><path d="M4 16V23M1.500 21L4 23.500L6.500 21" stroke="#209a50"/></svg>
    <div class="ml-[19px]">0K/s<br>0K/s</div>
    <svg class="ml-[3px] size-5"><circle cx="9" cy="11" r="8" fill="#2f7be0"/><path d="M9 7V15M5 11H13" stroke="#fff" stroke-width="2"/><circle cx="15" cy="4" r="3.500" fill="#d83030"/></svg>
  </div>
  <div class="relative flex size-[50px] items-center justify-center rounded-full border-2 border-[#b8bcb8] bg-white shadow-lg"><div class="flex size-11 items-center justify-center rounded-full border border-[#1c8c54] bg-gradient-to-b from-[#12805a] from-25% to-[#46cf5c] to-25% font-['Liberation_Sans',sans-serif] text-[15px] text-white">71%</div></div>
</div>

<!-- hand-drawn markup -->
<svg class="pointer-events-none absolute left-[370px] top-[210px] h-[100px] w-[360px]" fill="none" stroke="#f00" stroke-width="3"><ellipse cx="87" cy="79" rx="81" ry="18"/><path d="M217 81L344 12"/><path d="M353 7L341 8L346 17Z" fill="#f00" stroke-width="1"/></svg>

<script>
const mono = s => s.replace(/[\x20-\x7e]+/g, m => `<span class="font-['Liberation_Mono',monospace] text-[10px]">${m}</span>`);
document.querySelectorAll('[data-mono]').forEach(e => { e.innerHTML = mono(e.textContent); });

document.getElementById('menus').innerHTML = ['文件(F)','编辑(E)','楼层(L)','构件(N)','绘图(D)','修改(M)','钢筋量(Q)','视图(V)','工具(T)','云应用(Y)','BIM应用(I)','在线服务(S)','帮助(H)','版本号(B)']
  .map(m => `<button>${m}</button>`).join('');

const nodes = [
  ['grid','轴网(J)'],['raft','筏板基础(M)'],['col','框柱(Z)'],['shear','剪力墙(Q)'],['beam','梁(L)'],['slab','现浇板(B)',1],
  ['fold','轴线'],['fold','柱'],['fold','墙'],['fold','门窗洞'],['foldo','梁'],['beam','梁(L)'],['ring','圈梁(E)',1],['foldo','板'],
  ['slab','现浇板(B)'],['spiral','螺旋板(B)'],['cap','柱帽(V)'],['hole','板洞(N)'],['reb','板受力筋(S)'],['neg','板负筋(F)'],['band','楼层板带(H)',1],
  ['foldo','基础'],['fbeam','基础梁(F)'],['raft','筏板基础(M)'],['pit','集水坑(K)'],['pier','柱墩(Y)'],['reb','筏板主筋(R)'],['neg','筏板负筋(X)'],
  ['iso','独立基础(P)'],['strip','条形基础(T)'],['raft','桩承台(V)']];
document.getElementById('tree').innerHTML = nodes.map(([ic, t, last]) => {
  if (ic === 'fold' || ic === 'foldo') {
    const chev = ic === 'fold' ? '<path d="M2 0L6 4L2 8" stroke="#999"/>' : '<path d="M0 2L4 6L8 2" stroke="#444"/>';
    return `<li class="flex h-4 items-center pl-2"><svg class="size-[9px]" fill="none" stroke-width="2">${chev}</svg><span class="mr-px ml-1 w-[2px] border-b border-dotted border-[#777]"></span><svg class="mr-1 size-4"><use href="#${ic}"/></svg>${t}</li>`;
  }
  const branch = last
    ? '<span class="h-4 w-[10px]"><span class="block h-2 border-b border-l border-dotted border-[#777]"></span></span>'
    : '<span class="h-4 w-[10px] border-l border-dotted border-[#777]"><span class="block h-2 border-b border-dotted border-[#777]"></span></span>';
  const sel = t === '板洞(N)' ? 'bg-[#d9d9d9]' : '';
  return `<li class="flex h-4 items-center pl-[13px]"><span class="h-4 w-[19px] border-l border-dotted border-[#777]"></span>${branch}<span class="${sel} flex h-4 items-center pl-px pr-1"><svg class="mr-1 size-4"><use href="#${ic}"/></svg><span>${mono(t)}</span></span></li>`;
}).join('');

const props = ['名称','半径(mm)','板短跨向加筋','板长跨向加筋','圆形加强筋','斜加筋','其它钢筋','汇总信息','备注','显示样式'];
document.getElementById('props').innerHTML = props.map((p, i) => {
  const num = i === 6 ? 'bg-[#ffd28c] text-[#5a0050]' : 'bg-gradient-to-b from-white to-[#f0f0f0]';
  const cell = i < 6 ? 'pl-5 text-[#0000e8]' : i === 6 ? 'bg-[#0078d7] pl-5 text-white' : i === 9 ? 'pl-[2px] text-[#888]' : 'pl-5';
  const plus = i === 9 ? '<button aria-label="展开" class="mr-[5px] inline-block size-[13px] border border-[#999] align-middle text-center text-[13px] leading-[10px] text-black">+</button>' : '';
  return `<tr class="h-[19px]"><th class="${num} border-b border-r border-[#c0c0c0] p-0 text-[11px] font-normal leading-4">${i + 1}</th><td class="${cell} border-b border-r border-[#c0c0c0] py-0 leading-4">${plus}${mono(p)}</td></tr>`;
}).join('');
</script>
</body>
</html>
